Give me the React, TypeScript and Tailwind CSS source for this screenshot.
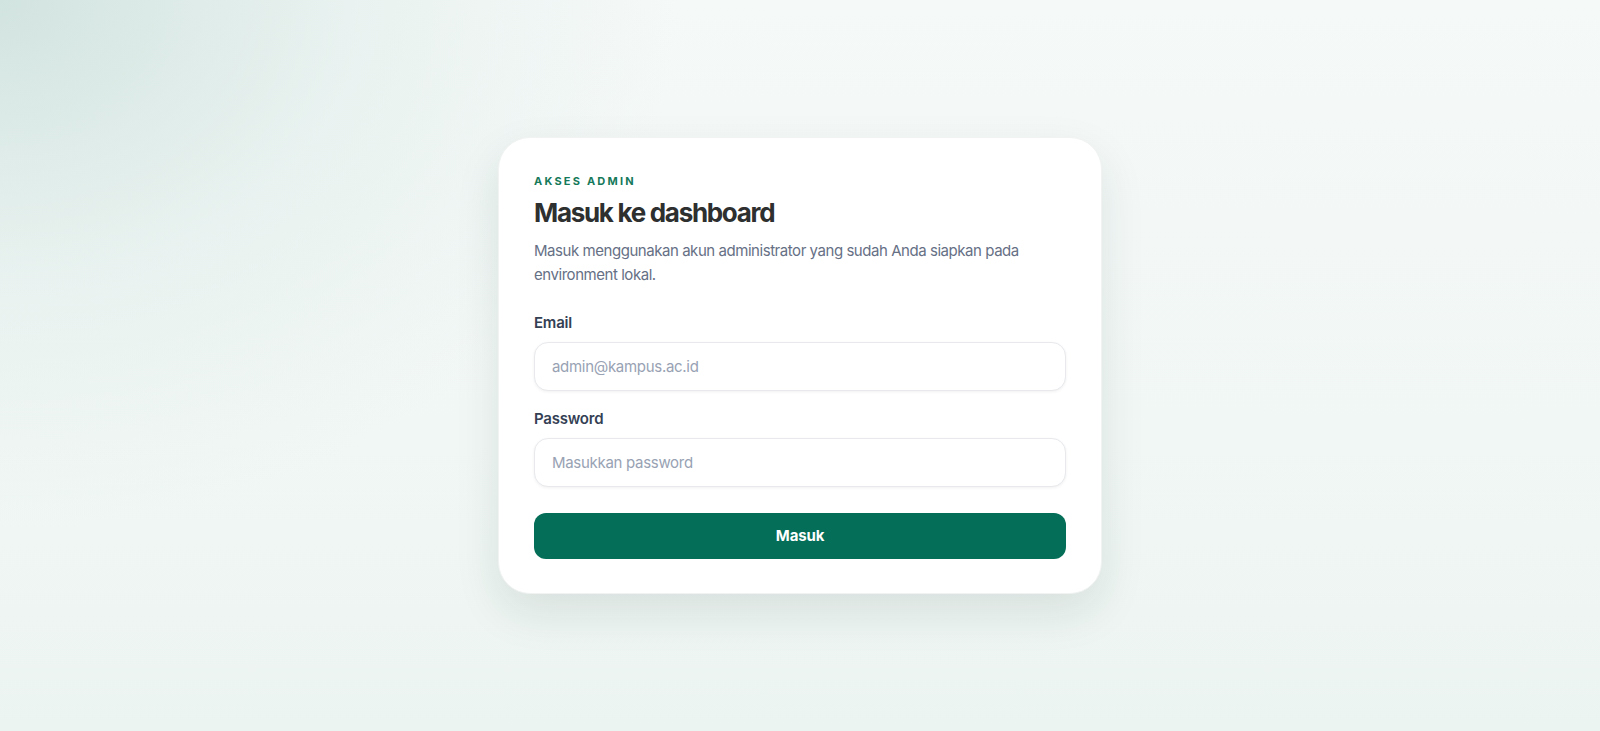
import React from "react";

export default function App() {
  return (
    <div
      className="min-h-[731px] w-full flex items-center justify-center bg-[radial-gradient(ellipse_900px_700px_at_0%_0%,#d2e4e0_0%,rgba(226,238,235,0.6)_40%,rgba(244,248,247,0)_75%),linear-gradient(180deg,#f5f9f8_0%,#f1f7f5_60%,#ecf4f1_100%)]"
      style={{ fontFamily: "Inter, 'Noto Sans', sans-serif" }}
    >
      <div className="w-[604px] rounded-[32px] bg-white px-[35px] pt-[35px] pb-[34px] shadow-[0_18px_45px_rgba(20,50,40,0.10)] border border-[#f0f3f2]">
        <p className="text-[11px] leading-4 font-bold tracking-[0.2em] text-[#15795a]">AKSES ADMIN</p>
        <h1 className="mt-2 text-[26px] leading-8 font-bold tracking-[-0.05em] text-[#2e2f2f]">Masuk ke dashboard</h1>
        <p className="mt-[10px] text-[15px] leading-6 text-[#667085] tracking-[-0.03em]">
          Masuk menggunakan akun administrator yang sudah Anda siapkan pada environment lokal.
        </p>
        <form className="mt-[26px] flex flex-col" onSubmit={(e) => e.preventDefault()}>
          <label className="text-[15px] leading-5 font-semibold tracking-[-0.015em] text-[#344054]">Email</label>
          <input
            type="email"
            placeholder="admin@kampus.ac.id"
            className="mt-[9px] h-[49px] w-full rounded-[14px] border border-[#e7e9ec] bg-white px-[17px] text-[15px] tracking-[-0.02em] text-[#344054] placeholder:text-[#98a2b3] outline-none shadow-[0_1px_3px_rgba(16,24,40,0.06)]"
          />
          <label className="mt-[18px] text-[15px] leading-5 font-semibold tracking-[-0.015em] text-[#344054]">Password</label>
          <input
            type="password"
            placeholder="Masukkan password"
            className="mt-[9px] h-[49px] w-full rounded-[14px] border border-[#e7e9ec] bg-white px-[17px] text-[15px] tracking-[-0.02em] text-[#344054] placeholder:text-[#98a2b3] outline-none shadow-[0_1px_3px_rgba(16,24,40,0.06)]"
          />
          <button
            type="submit"
            className="mt-[26px] h-[46px] w-full rounded-[12px] bg-[#046e58] text-[15px] font-bold tracking-[-0.01em] text-white"
          >
            Masuk
          </button>
        </form>
      </div>
    </div>
  );
}
